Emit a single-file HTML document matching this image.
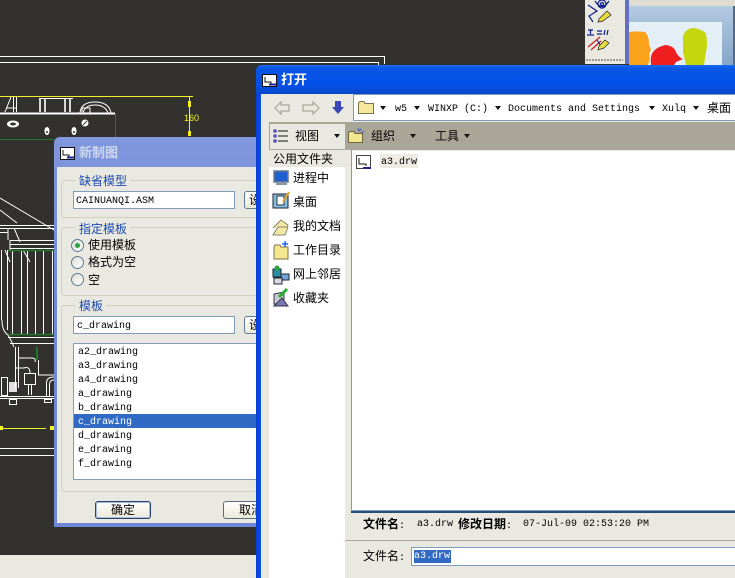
<!DOCTYPE html>
<html><head><meta charset="utf-8"><style>
html,body{margin:0;padding:0;background:#33312e}
#r{position:relative;width:735px;height:578px;overflow:hidden;background:#33312e;font:12px/14px "Liberation Sans","WenQuanYi Zen Hei","Noto Sans CJK SC",sans-serif;color:#000}
#r div,#r svg{position:absolute}
.t{white-space:pre}
.m{font:10px/14px "Liberation Mono","WenQuanYi Zen Hei",monospace;white-space:pre}
.g{border:1px solid #d0d0bf;border-radius:4px}
.b{color:#1a4bb0;background:#eae9e1;padding:0 3px 0 3px;white-space:pre}
.i{background:#fff;border:1px solid #7f9db9;box-sizing:border-box}
.rd{width:13px;height:13px;border-radius:50%;border:1px solid #5a7a96;box-sizing:border-box;background:linear-gradient(135deg,#dcdcd4,#fff)}
.btn{box-sizing:border-box;border:1px solid #25436e;border-radius:3px;background:linear-gradient(#fff,#ece9d8);text-align:center;line-height:16px}
.a{width:0;height:0;border-left:3px solid transparent;border-right:3px solid transparent;border-top:4px solid #111}
</style></head><body><div id="r">
<div style="left:0;top:555px;width:256px;height:23px;background:#eae9e1"></div>

<svg style="left:0;top:0" width="735" height="578" fill="none">
<g stroke="#fff" stroke-width="1">
<path d="M0 56.500H384M0 62.500H378M384.500 56V64M378.500 62V65"/>
<path d="M0 448.500H54M0 455.500H54"/>
<path d="M0 198L54 230M0 210L17 223M0 225.500H54M0 228.500H54M0 232.500H8M8 228V240M10 240.500H54M10 244.500H54M10 248.500H54M10 240V250M14 228L20 242M5 250L10 262M23 250L30 262"/>
<path d="M1.500 250V320M7.500 250V330M12.500 250V335M21.500 250V335M27.500 250V335M35.500 250V335M43.500 250V335M52.500 250V335"/>
<path d="M8 337.500H54M10 343.500H54M2 320Q2 331 8 335Q11 340 14 347M15.500 347V388M18.500 347V388M18 358H32Q36 358 35 362M16 368H24M38.500 360V375H54M24 368Q30 366 30 373"/>
<rect x="24.500" y="373.500" width="11" height="11"/><path d="M28.500 385V395M31.500 385V395M0 396.500H54M0 398.500H54"/>
<rect x="1.500" y="377.500" width="6" height="18"/>
<path d="M46.500 396V383Q46.500 377 54 377M49.500 396V384Q50 380 54 380"/>
<rect x="9.500" y="399.500" width="7" height="5"/><rect x="44.500" y="399.500" width="7" height="3"/>
<path d="M5 112L11 97M13.500 97V112M16.500 97V112M6 108H16"/>
<path d="M80 113Q81 102 95 102Q109 102 111 113M83 113Q85 105 95 105Q105 105 108 113M82 112V108H90V113"/>
</g>
<path d="M40 98V112M45 98V112M65 98V112M70 98V112" stroke="#fff" stroke-width="1.600"/>
<path d="M39 98.500H73" stroke="#fff"/>
<rect x="9" y="382" width="8" height="10" fill="#fff" opacity=".85"/>
<path d="M0 113.500H115" stroke="#fff" stroke-width="2"/>
<path d="M0 96.500H193" stroke="#f2f227" stroke-width="1"/>
<path d="M189.500 97V135M0 428.500H46" stroke="#f2f227"/>
<rect x="188" y="101" width="3" height="6" fill="#f2f227"/><rect x="188" y="131" width="3" height="5" fill="#f2f227"/>
<rect x="0" y="426" width="3" height="4" fill="#f2f227"/><rect x="50" y="426" width="4" height="4" fill="#f2f227"/>
<path d="M115.500 113V138M0 139.500H54" stroke="#1f7a2c"/>
<path d="M8 250.500H54M8 334.500H54" stroke="#1f7a2c" stroke-width="1.500"/>
<path d="M37 347V360" stroke="#1f7a2c" stroke-width="2"/>
<g fill="#fff"><ellipse cx="13" cy="124" rx="6" ry="3.500"/><ellipse cx="47" cy="131" rx="2.500" ry="4"/><ellipse cx="74" cy="131" rx="2.500" ry="4"/><circle cx="85" cy="123" r="3.500"/></g>
<g fill="#33312e"><ellipse cx="13" cy="124" rx="3" ry="1.500"/><circle cx="47" cy="132" r="1"/><circle cx="74" cy="132" r="1"/></g>
<path d="M83 125L87 121" stroke="#33312e"/>
<text x="184" y="121" fill="#f2f227" font-family="Liberation Sans" font-size="9">160</text>
</svg>

<!-- top right -->
<div style="left:585px;top:0;width:40px;height:64px;background:#eae9e1"></div>
<div style="left:586px;top:59px;width:37px;height:2px;background:repeating-linear-gradient(90deg,#999 0 2px,transparent 2px 3px)"></div>
<div style="left:625px;top:0;width:4px;height:64px;background:#6570c4"></div>
<div style="left:629px;top:0;width:106px;height:6px;background:#dfdcd2"></div>
<div style="left:629px;top:6px;width:106px;height:59px;background:linear-gradient(#b4cbe2,#84a6c8)"></div>
<div style="left:733px;top:6px;width:2px;height:59px;background:#566b82"></div>
<div style="left:629px;top:22px;width:93px;height:43px;background:#e3eef6"></div>
<svg style="left:584px;top:0" width="151" height="65">
<path d="M45 32Q54 31 61 32Q65 36 65 44L67 50Q64 54 66 58L64 65H45Z" fill="#f9a21a"/>
<path d="M67 64Q66 56 69 52Q74 46 82 45Q90 46 92 52Q94 57 99 59L92 62L90 65H67Z" fill="#ef1f1f"/>
<path d="M99 36Q102 28 110 28Q120 30 122 34Q124 44 122 52L120 65H102L99 52Z" fill="#c6d60c"/>
<g stroke="#0c1c8a" stroke-width="1.200" fill="none">
<circle cx="18" cy="4" r="1.500"/><circle cx="18" cy="4" r="4"/><path d="M11 1Q18 12 25 1"/><path d="M4 5L13 11L5 16L9 22"/>
<path d="M4 30H9M6.500 30V34M3 35H10M13 31H18M13 34H18M21 30L20 35M24 30L23 35"/>
</g>
<path d="M4 47L16 37M7 50L17 41" stroke="#c91d1d" stroke-width="1.200"/>
<path d="M13 40L19 49" stroke="#0c1c8a"/>
<path d="M15 19L23 11L27 15L19 21L14 22Z" fill="#e8dc3a" stroke="#222" stroke-width=".7"/>
<path d="M15 46L21 40L25 43L20 48L14 50Z" fill="#e8dc3a" stroke="#222" stroke-width=".7"/>
</svg>

<!-- new drawing dialog -->
<div style="left:54px;top:137px;width:202px;height:390px;border-radius:6px 0 0 0;background:linear-gradient(#8097dd,#6f87d6 50%,#6f87d6)"></div>
<div style="left:57px;top:167px;width:199px;height:356px;background:#eae9e1"></div>
<svg style="left:60px;top:147px" width="15" height="13"><rect x=".5" y=".5" width="14" height="12" fill="#fff" stroke="#111"/><path d="M3 3V8H9V10" stroke="#111" fill="none"/><path d="M7 10.500H14" stroke="#2020a0" stroke-width="2"/></svg>
<div class="t" style="left:79px;top:146px;font-size:13px;font-weight:bold;color:#cdd8f3">新制图</div>

<div class="g" style="left:61px;top:180px;width:200px;height:36px"></div>
<div class="b" style="left:76px;top:174px">缺省模型</div>
<div class="i" style="left:73px;top:191px;width:162px;height:18px"></div>
<div class="m" style="left:76px;top:195px;font-size:10px">CAINUANQI.ASM</div>
<div class="btn" style="left:244px;top:191px;width:20px;height:18px;text-align:left;padding-left:4px;border-color:#5a7a96">设</div>

<div class="g" style="left:61px;top:227px;width:200px;height:67px"></div>
<div class="b" style="left:76px;top:222px">指定模板</div>
<div class="rd" style="left:71px;top:239px"></div><div style="left:75px;top:243px;width:5px;height:5px;border-radius:50%;background:#2ea33c"></div>
<div class="rd" style="left:71px;top:256px"></div>
<div class="rd" style="left:71px;top:273px"></div>
<div class="t" style="left:88px;top:238px">使用模板</div>
<div class="t" style="left:88px;top:255px">格式为空</div>
<div class="t" style="left:88px;top:273px">空</div>

<div class="g" style="left:61px;top:305px;width:200px;height:185px"></div>
<div class="b" style="left:76px;top:299px">模板</div>
<div class="i" style="left:73px;top:316px;width:162px;height:18px"></div>
<div class="m" style="left:77px;top:320px">c_drawing</div>
<div class="btn" style="left:244px;top:316px;width:20px;height:18px;text-align:left;padding-left:4px;border-color:#5a7a96">设</div>
<div class="i" style="left:73px;top:343px;width:190px;height:137px"></div>
<div style="left:74px;top:414px;width:182px;height:14px;background:#316ac5"></div>
<div class="m" style="left:78px;top:346px">a2_drawing
a3_drawing
a4_drawing
a_drawing
b_drawing
<span style="color:#fff">c_drawing</span>
d_drawing
e_drawing
f_drawing</div>
<div class="btn" style="left:95px;top:501px;width:56px;height:18px;border-color:#25436e;box-shadow:inset 0 0 0 1px #a9bcdc">确定</div>
<div class="btn" style="left:223px;top:501px;width:50px;height:18px;border-color:#5a6a80;text-align:left;padding-left:15px">取消</div>

<!-- open dialog -->
<div style="left:256px;top:65px;width:479px;height:513px;border-radius:6px 0 0 0;background:linear-gradient(90deg,#0a3fd0,#0a50e6 5px)"></div>
<div style="left:256px;top:65px;width:479px;height:29px;border-radius:6px 0 0 0;background:linear-gradient(#1c6cf0,#0a56e6 12%,#0450e8 70%,#0a48c8)"></div>
<div style="left:261px;top:94px;width:474px;height:484px;background:#eae9e1"></div>
<svg style="left:262px;top:74px" width="15" height="13"><rect x=".5" y=".5" width="14" height="12" fill="#fff" stroke="#111"/><path d="M3 3V8H9V10" stroke="#111" fill="none"/><path d="M7 10.500H14" stroke="#2020a0" stroke-width="2"/></svg>
<div class="t" style="left:281px;top:73px;font-size:13px;font-weight:bold;color:#fff">打开</div>

<svg style="left:272px;top:98px" width="76" height="20">
<path d="M3 10L9 4V7H17V13H9V16Z" fill="#eae9e1" stroke="#aaa69a" stroke-width="1.200"/>
<path d="M48 10L42 4V7H32V13H42V16Z" transform="translate(-1 0)" fill="#eae9e1" stroke="#aaa69a" stroke-width="1.200"/>
<path d="M63 3H69V9H72L66 16L60 9H63Z" fill="#3a45b8"/>
</svg>
<div class="i" style="left:353px;top:94px;width:382px;height:27px;border-width:1px 0 1px 1px"></div>
<svg style="left:358px;top:100px" width="16" height="15"><path d="M.5 3V13.500H15.500V3.500H7L6 1.500H2Z" fill="#f4e89a" stroke="#7c7250"/></svg>
<div class="a" style="left:380px;top:106px"></div>
<div class="m" style="left:395px;top:103px">w5</div>
<div class="a" style="left:414px;top:106px"></div>
<div class="m" style="left:428px;top:103px">WINXP (C:)</div>
<div class="a" style="left:495px;top:106px"></div>
<div class="m" style="left:508px;top:103px">Documents and Settings</div>
<div class="a" style="left:649px;top:106px"></div>
<div class="m" style="left:662px;top:103px">Xulq</div>
<div class="a" style="left:693px;top:106px"></div>
<div class="t" style="left:707px;top:101px">桌面</div>

<div style="left:269px;top:122px;width:466px;height:28px;background:#a9a698"></div>
<div style="left:270px;top:124px;width:75px;height:25px;background:#eae9e1"></div>
<svg style="left:272px;top:128px" width="20" height="16" fill="none"><path d="M2 2H4V4H2ZM2 7H4V9H2ZM2 12H4V14H2Z" stroke="#2020b0"/><path d="M6 3H16M6 8H16M6 13H16" stroke="#111"/></svg>
<div class="t" style="left:295px;top:129px">视图</div>
<div class="a" style="left:334px;top:134px"></div>
<svg style="left:348px;top:127px" width="18" height="17"><path d="M.5 6V15.500H14.500V6.500H7L6 4.500H2Z" fill="#f3e58e" stroke="#6e6540"/><path d="M11 4L13 2M13 6L16 4M10 1L11 4" stroke="#3850b0"/></svg>
<div class="t" style="left:371px;top:129px">组织</div>
<div class="a" style="left:410px;top:134px"></div>
<div class="t" style="left:435px;top:129px">工具</div>
<div class="a" style="left:464px;top:134px"></div>

<div class="t" style="left:273px;top:152px">公用文件夹</div>
<div style="left:269px;top:167px;width:76px;height:411px;background:#fff"></div>
<div style="left:352px;top:151px;width:383px;height:359px;background:#fff"></div>
<div style="left:351px;top:150px;width:1px;height:360px;background:#7f9db9"></div>
<svg style="left:356px;top:155px" width="15" height="15"><rect x=".5" y=".5" width="14" height="13" fill="#fff" stroke="#444"/><path d="M3 3V9H10V11" stroke="#111" fill="none"/><path d="M7 13H15" stroke="#2020a0" stroke-width="2"/></svg>
<div style="left:380px;top:154px;width:38px;height:14px;background:#eeece2"></div>
<div class="m" style="left:381px;top:156px">a3.drw</div>

<svg style="left:272px;top:170px" width="20" height="140">
<rect x="2" y="1" width="14" height="11" fill="#1f5fd0" stroke="#6a7a90" stroke-width="1.500"/><path d="M4 14H15" stroke="#8a94a2" stroke-width="2"/>
<rect x="1" y="24" width="15" height="14" fill="#7fbfe0" stroke="#223"/><rect x="5" y="26" width="7" height="9" fill="#fff" stroke="#333"/><path d="M11 32L17 22" stroke="#e0a020" stroke-width="2"/>
<path d="M1 58L9 50L16 55L15 57H6L1 65H13L16 57" fill="#f3e8a8" stroke="#8a8468"/>
<path d="M2 77V89H16V77H9L8 75H3Z" fill="#f4e88e" stroke="#7b7248"/><path d="M13 71V77M10 74H16" stroke="#2266dd" stroke-width="1.500"/>
<rect x="1" y="99" width="8" height="8" fill="#2a8f9f" stroke="#223"/><rect x="9" y="104" width="8" height="6" fill="#6fa8d8" stroke="#223"/><rect x="2" y="108" width="8" height="6" fill="#d8dce0" stroke="#223"/><circle cx="5" cy="98" r="2.500" fill="#2fa838"/>
<path d="M2 124L12 122V134H2Z" fill="#c8c8d8" stroke="#334"/><path d="M2 136L10 128L16 136Z" fill="#7a78b0" stroke="#334"/><path d="M7 127L15 119" stroke="#22b030" stroke-width="3"/>
</svg>
<div class="t" style="left:293px;top:171px">进程中</div>
<div class="t" style="left:293px;top:195px">桌面</div>
<div class="t" style="left:293px;top:219px">我的文档</div>
<div class="t" style="left:293px;top:243px">工作目录</div>
<div class="t" style="left:293px;top:267px">网上邻居</div>
<div class="t" style="left:293px;top:291px">收藏夹</div>

<div style="left:351px;top:510px;width:384px;height:1px;background:#7f9db9"></div>
<div style="left:351px;top:511px;width:384px;height:2px;background:#1f4f78"></div>
<div style="left:345px;top:540px;width:390px;height:1px;background:#aca899"></div>
<div class="t" style="left:363px;top:517px;font-weight:bold">文件名<span class="m" style="font-weight:normal">: </span></div>
<div class="m" style="left:417px;top:518px">a3.drw</div>
<div class="t" style="left:458px;top:517px;font-weight:bold">修改日期<span class="m" style="font-weight:normal">:</span></div>
<div class="m" style="left:523px;top:518px">07-Jul-09 02:53:20 PM</div>
<div class="t" style="left:363px;top:549px">文件名<span class="m">:</span></div>
<div class="i" style="left:411px;top:547px;width:324px;height:19px;border-right:0"></div>
<div style="left:414px;top:550px;width:37px;height:13px;background:#316ac5"></div>
<div class="m" style="left:414px;top:551px;color:#fff;line-height:12px">a3.drw</div>
</div></body></html>
